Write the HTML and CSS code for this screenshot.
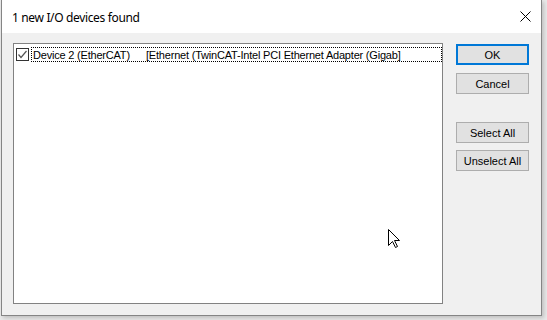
FILE: index.html
```html
<!DOCTYPE html>
<html>
<head>
<meta charset="utf-8">
<link rel="stylesheet" href="styles.css">
</head>
<body>
<div class="window">
  <div class="titlebar">
    <span class="title">1 new I/O devices found</span>
    <svg class="close" width="11" height="11" viewBox="0 0 11 11"><path d="M0.5 0.5 L10.5 10.5 M10.5 0.5 L0.5 10.5" stroke="#000" stroke-width="1" fill="none"/></svg>
  </div>
  <div class="content">
    <div class="listbox">
      <div class="row">
        <span class="check"><svg width="11" height="11" viewBox="0 0 11 11"><path d="M1.5 5.5 L4 8.5 L9.5 2" stroke="#555" stroke-width="1.2" fill="none"/></svg></span>
        <span class="focus"><span class="col1">Device 2 (EtherCAT)</span><span class="col2">[Ethernet (TwinCAT-Intel PCI Ethernet Adapter (Gigab]</span></span>
      </div>
    </div>
    <div class="buttons">
      <button class="btn default">OK</button>
      <button class="btn">Cancel</button>
      <button class="btn spaced">Select All</button>
      <button class="btn">Unselect All</button>
    </div>
  </div>
  <svg class="cursor" width="13" height="20" viewBox="0 0 13 20"><path d="M0.5 0.5 L0.5 16.5 L4.5 12.5 L7.5 18.5 L9.5 17.5 L6.5 11.5 L11.5 11.5 Z" fill="#fff" stroke="#000" stroke-width="1" stroke-linejoin="miter"/></svg>
</div>
</body>
</html>
```
FILE: styles.css
```css
html, body {
  margin: 0;
  padding: 0;
}
body {
  width: 547px;
  height: 320px;
  background: #e9e9e9;
  overflow: hidden;
}
.window {
  position: relative;
  margin-left: 1px;
  width: 539px;
  height: 315px;
  border: 1px solid #858585;
  border-top: none;
  background: #f0f0f0;
  box-shadow: 2px 2px 4px rgba(0,0,0,0.18);
  display: flex;
  flex-direction: column;
}
.titlebar {
  height: 33px;
  background: #fff;
  display: flex;
  align-items: center;
  padding-left: 10px;
  padding-right: 10px;
  box-sizing: border-box;
}
.title {
  font-family: "Noto Sans", "Open Sans", sans-serif;
  font-size: 12px;
  letter-spacing: -0.35px;
  color: #000;
  flex: 1;
  position: relative;
  top: 1px;
}
.close {
  display: block;
}
.content {
  flex: 1;
  display: flex;
  padding: 10px 0 11px 11px;
}
.listbox {
  background: #fff;
  border: 1px solid #828282;
  padding: 3px 0 0 2px;
  box-sizing: content-box;
  width: 426px;
  height: 256px;
}
.row {
  display: flex;
  align-items: center;
  height: 15px;
  font-family: "Liberation Sans", Arial, sans-serif;
  font-size: 11px;
  color: #000;
}
.check {
  width: 13px;
  height: 13px;
  box-sizing: border-box;
  border: 1px solid #333;
  background: #fff;
  display: flex;
  align-items: center;
  justify-content: center;
  margin-right: 2px;
}
.focus {
  flex: 1;
  height: 15px;
  box-sizing: border-box;
  border: 1px dotted #000;
  display: flex;
  align-items: center;
  padding-left: 1px;
  letter-spacing: -0.2px;
}
.col1 {
  width: 113px;
  flex: none;
}
.col2 {
  white-space: nowrap;
}
.buttons {
  display: flex;
  flex-direction: column;
  margin-left: 13px;
  padding-top: 1px;
}
.btn {
  width: 73px;
  height: 21px;
  margin: 0 0 8px 0;
  padding: 0;
  background: #e1e1e1;
  border: 1px solid #adadad;
  font-family: "Liberation Sans", Arial, sans-serif;
  font-size: 11px;
  color: #000;
  letter-spacing: 0;
}
.btn.default {
  border: 2px solid #0078d7;
}
.btn.spaced {
  margin-top: 20px;
  margin-bottom: 7px;
}
.cursor {
  position: absolute;
  left: 386px;
  top: 229px;
}
```
